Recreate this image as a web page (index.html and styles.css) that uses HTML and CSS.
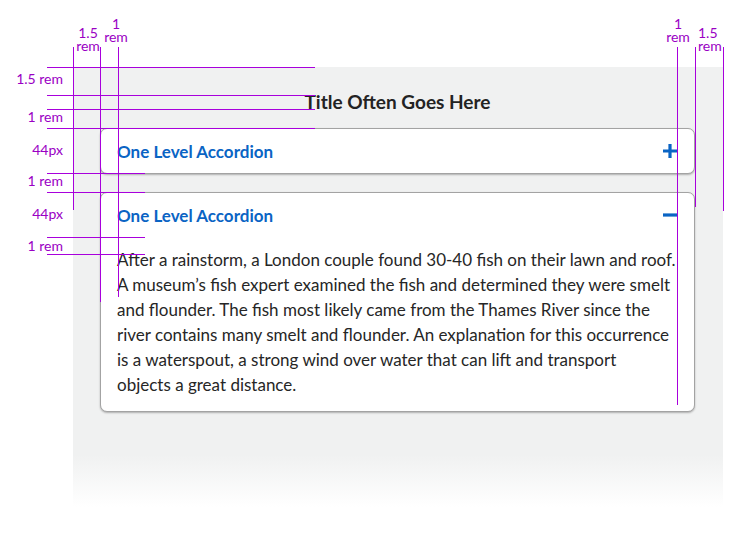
FILE: index.html
```html
<!DOCTYPE html>
<html lang="en">
<head>
<meta charset="utf-8">
<title>Accordion spec</title>
<link rel="stylesheet" href="styles.css">
</head>
<body>
<div class="stage">
  <section class="panel">
    <h2 class="title">Title Often Goes Here</h2>
    <div class="accordion">
      <div class="item">
        <div class="head">
          <span class="label">One Level Accordion</span>
          <svg class="icon" width="14" height="14" viewBox="0 0 14 14" aria-hidden="true"><path d="M0 7H14M7 0V14" stroke="#0a64c4" stroke-width="3.2"/></svg>
        </div>
      </div>
      <div class="item open">
        <div class="head">
          <span class="label">One Level Accordion</span>
          <svg class="icon" width="14" height="14" viewBox="0 0 14 14" aria-hidden="true"><path d="M0 7H14" stroke="#0a64c4" stroke-width="3.2"/></svg>
        </div>
        <div class="body">
          <p>After a rainstorm, a London couple found 30-40 fish on their lawn and roof.<br>A museum’s fish expert examined the fish and determined they were smelt<br>and flounder. The fish most likely came from the Thames River since the<br>river contains many smelt and flounder. An explanation for this occurrence<br>is a waterspout, a strong wind over water that can lift and transport<br>objects a great distance.</p>
        </div>
      </div>
    </div>
  </section>

  <div class="annotations" aria-hidden="true">
    <span class="hl h-67"></span>
    <span class="hl h-95"></span>
    <span class="hl h-109"></span>
    <span class="hl h-128"></span>
    <span class="hl h-173"></span>
    <span class="hl h-192"></span>
    <span class="hl h-237"></span>
    <span class="hl h-254"></span>

    <span class="vl v-73"></span>
    <span class="vl v-100"></span>
    <span class="vl v-118"></span>
    <span class="vl v-677"></span>
    <span class="vl v-695"></span>
    <span class="vl v-723"></span>

    <span class="tag top t-l15"><span class="ln">1.5</span><span class="ln">rem</span></span>
    <span class="tag top t-l1"><span class="ln">1</span><span class="ln">rem</span></span>
    <span class="tag top t-r1"><span class="ln">1</span><span class="ln">rem</span></span>
    <span class="tag top t-r15"><span class="ln">1.5</span><span class="ln">rem</span></span>

    <span class="tag side s-79">1.5 rem</span>
    <span class="tag side s-117">1 rem</span>
    <span class="tag side s-151">44px</span>
    <span class="tag side s-182">1 rem</span>
    <span class="tag side s-215">44px</span>
    <span class="tag side s-246">1 rem</span>
  </div>
</div>
</body>
</html>
```

FILE: styles.css
```css
* { box-sizing: border-box; }

html, body {
  margin: 0;
  padding: 0;
  background: #ffffff;
}

body {
  font-family: Lato, "Open Sans", "Liberation Sans", sans-serif;
  color: #222;
}

.stage {
  position: relative;
  width: 749px;
  height: 539px;
  padding: 67px 0 0 73px;
}

.panel {
  width: 650px;
  height: 440px;
  padding: 23px 28px 0 27px;
  background: linear-gradient(to bottom, #f0f1f1 0, #f0f1f1 388px, #ffffff 440px);
}

.title {
  margin: 0 0 14px;
  font-size: 19px;
  line-height: 24px;
  font-weight: 700;
  text-align: center;
  color: #232323;
}

.accordion {
  display: flex;
  flex-direction: column;
  gap: 18px;
}

.item {
  background: #fff;
  border: 1px solid #a3a3a3;
  border-radius: 7px;
  box-shadow: 0 1px 2px rgba(0, 0, 0, 0.28);
}

.head {
  height: 44px;
  display: flex;
  align-items: center;
  justify-content: space-between;
  padding: 0 17px 0 16px;
}

.label {
  font-size: 17px;
  font-weight: 700;
  color: #0a64c4;
}

.icon {
  display: block;
  flex: none;
}

.body {
  padding: 10px 16px 14px 16px;
}

.body p {
  margin: 0;
  font-size: 17px;
  line-height: 25px;
  white-space: nowrap;
  color: #262626;
}

/* measurement overlay */
.annotations {
  position: absolute;
  inset: 0;
  pointer-events: none;
  font-family: Lato, "Open Sans", sans-serif;
  color: #9a00c4;
}

.hl, .vl {
  position: absolute;
  background: #a800dc;
}

.hl { height: 1px; left: 47px; width: 98px; }
.h-67, .h-95, .h-109, .h-128 { width: 268px; }
.h-67 { top: 67px; }
.h-95 { top: 95px; }
.h-109 { top: 109px; }
.h-128 { top: 128px; }
.h-173 { top: 173px; }
.h-192 { top: 192px; }
.h-237 { top: 237px; }
.h-254 { top: 254px; }

.vl { width: 1px; top: 47px; }
.v-73 { left: 73px; height: 163px; }
.v-100 { left: 100px; height: 255px; }
.v-118 { left: 118px; height: 250px; }
.v-677 { left: 677px; height: 358px; }
.v-695 { left: 695px; height: 160px; }
.v-723 { left: 723px; height: 164px; }

.tag {
  position: absolute;
  font-size: 14px;
  line-height: 14px;
  white-space: nowrap;
}

.top {
  display: flex;
  flex-direction: column;
  align-items: center;
}
.ln {
  display: block;
  height: 13px;
  line-height: 13px;
}
.t-l15 { left: 76px; top: 26px; width: 24px; }
.t-l1 { left: 103px; top: 17px; width: 26px; }
.t-r1 { left: 665px; top: 17px; width: 26px; }
.t-r15 { left: 698px; top: 26px; width: 30px; align-items: flex-start; }

.side { right: 686px; }
.s-79 { top: 72px; }
.s-117 { top: 110px; }
.s-151 { top: 143px; }
.s-182 { top: 174px; }
.s-215 { top: 207px; }
.s-246 { top: 239px; }
```
